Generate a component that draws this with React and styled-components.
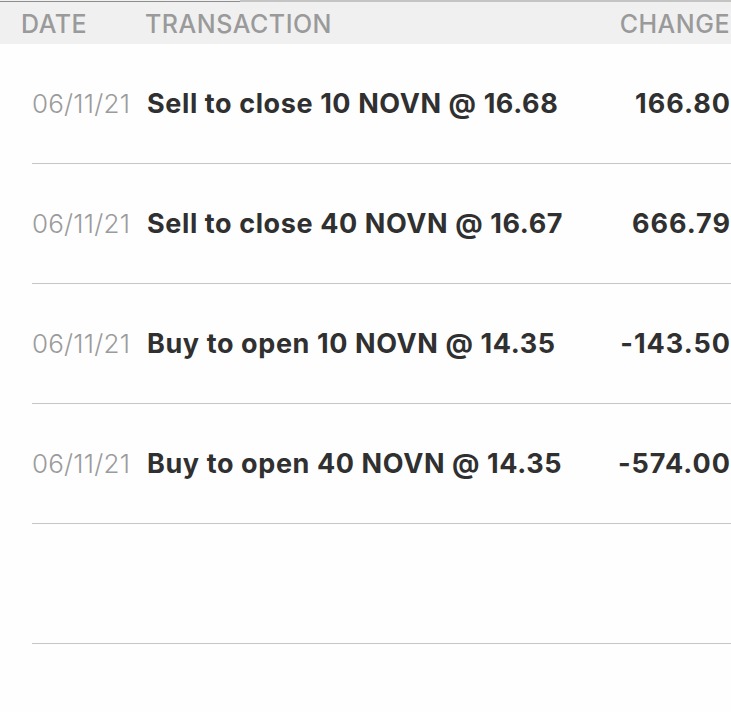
import React from 'react'
import styled, { createGlobalStyle } from 'styled-components'

const GlobalStyle = createGlobalStyle`
  html, body {
    margin: 0;
    padding: 0;
    background: #fefefe;
  }
  body {
    font-family: Inter, "Liberation Sans", sans-serif;
    -webkit-font-smoothing: antialiased;
  }
`

const Page = styled.div`
  width: 731px;
  height: 712px;
  overflow: hidden;
  background: #fefefe;
`

const TopEdge = styled.div`
  display: flex;
  height: 3px;
  background: #f0f0f0;
`

const EdgeSegment = styled.div`
  flex: ${p => p.$grow};
  border-top: ${p => p.$thick}px solid ${p => p.$color};
  margin-top: ${p => p.$offset}px;
`

const Header = styled.div`
  display: flex;
  align-items: center;
  height: 41px;
  background: #f0f0f0;
  padding: 0 1px 0 21px;
  font-size: 25px;
  font-weight: 500;
  color: #9a9a9a;
  letter-spacing: 0.5px;
`

const HeadDate = styled.div`
  width: 124px;
`

const HeadTx = styled.div`
  flex: 1;
`

const List = styled.div`
  padding-left: 32px;
`

const Row = styled.div`
  display: flex;
  align-items: center;
  height: 119px;
  border-bottom: 1.5px solid #c6c6c6;
`

const DateCell = styled.div`
  width: 115px;
  color: #9b9b9b;
  font-size: 26px;
  font-weight: 300;
  letter-spacing: 0.2px;
`

const TxCell = styled.div`
  flex: 1;
  color: #303030;
  font-size: 27px;
  font-weight: 700;
  letter-spacing: 0.6px;
`

const Amount = styled.div`
  color: #303030;
  font-size: 27px;
  font-weight: 700;
  text-align: right;
  letter-spacing: 1px;
`

const rows = [
  { date: '06/11/21', tx: 'Sell to close 10 NOVN @ 16.68', amount: '166.80' },
  { date: '06/11/21', tx: 'Sell to close 40 NOVN @ 16.67', amount: '666.79' },
  { date: '06/11/21', tx: 'Buy to open 10 NOVN @ 14.35', amount: '-143.50' },
  { date: '06/11/21', tx: 'Buy to open 40 NOVN @ 14.35', amount: '-574.00' },
  null,
]

export default function App() {
  return (
    <Page>
      <GlobalStyle />
      <TopEdge>
        <EdgeSegment $grow={240} $thick={1} $color="#8e8e8e" $offset={1} />
        <EdgeSegment $grow={491} $thick={2} $color="#c4c4c4" $offset={0} />
      </TopEdge>
      <Header>
        <HeadDate>DATE</HeadDate>
        <HeadTx>TRANSACTION</HeadTx>
        <div>CHANGE</div>
      </Header>
      <List>
        {rows.map((r, i) => (
          <Row key={i}>
            {r && (
              <>
                <DateCell>{r.date}</DateCell>
                <TxCell>{r.tx}</TxCell>
                <Amount>{r.amount}</Amount>
              </>
            )}
          </Row>
        ))}
      </List>
    </Page>
  )
}
